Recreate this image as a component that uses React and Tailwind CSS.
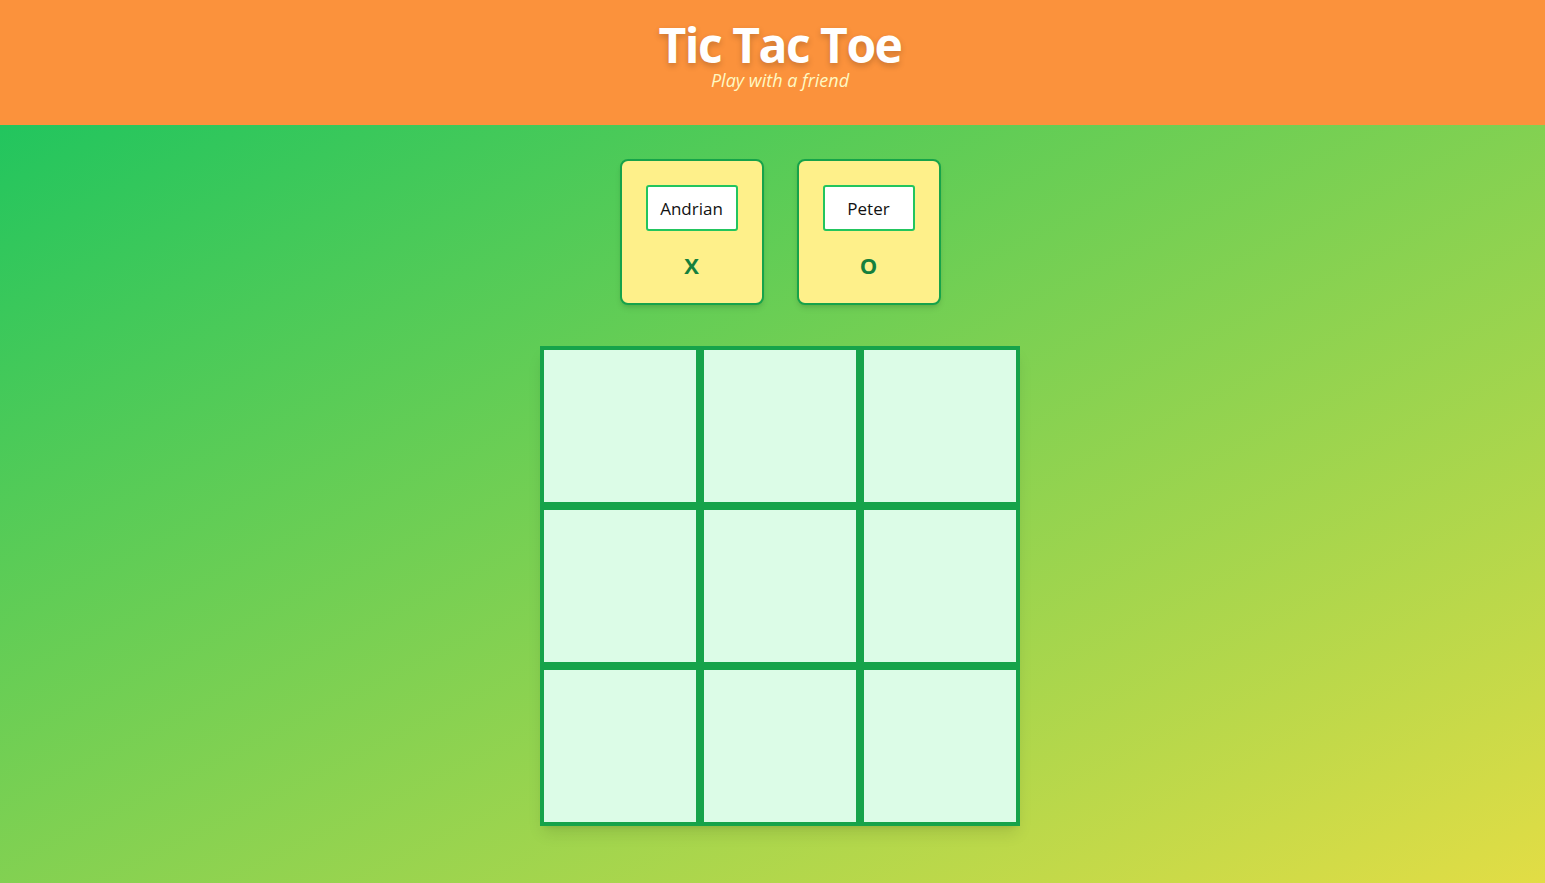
const players = [
  { name: "Andrian", symbol: "X" },
  { name: "Peter", symbol: "O" },
];

function PlayerCard({ name, symbol }) {
  return (
    <div className="w-36 rounded-lg border-2 border-[#16a34a] bg-[#fef08a] p-6 shadow-md flex flex-col items-center">
      <input
        readOnly
        defaultValue={name}
        className="w-full h-[46px] border-2 border-[#22c55e] bg-white text-center text-[17px] text-[#111] rounded-[3px] outline-none"
      />
      <span className="mt-5 text-[22px] leading-7 font-bold text-[#15803d]">{symbol}</span>
    </div>
  );
}

export default function App() {
  return (
    <div className="min-h-screen flex flex-col font-['Open_Sans',sans-serif]">
      <header className="bg-[#fb923c] h-[125px] flex flex-col items-center pt-[23px] pl-[15px]">
        <h1 className="text-[48px] leading-[44px] font-bold text-white tracking-[-1.5px] [text-shadow:0_3px_6px_rgba(0,0,0,0.2)]">
          Tic Tac Toe
        </h1>
        <p className="mt-[3px] text-[18px] leading-[20px] italic text-[#fef9c3]">Play with a friend</p>
      </header>

      <main className="flex-1 flex flex-col items-center pt-[34px] pb-[57px] pl-[15px] bg-linear-to-br/srgb from-[#22c55e] to-[#e2dd45]">
        <div className="flex gap-[33px]">
          {players.map((p) => (
            <PlayerCard key={p.symbol} {...p} />
          ))}
        </div>

        <div className="mt-[41px] grid grid-cols-3 shadow-lg">
          {Array.from({ length: 9 }).map((_, i) => (
            <button key={i} className="w-40 h-40 border-4 border-[#16a34a] bg-[#dcfce7]" />
          ))}
        </div>
      </main>
    </div>
  );
}
